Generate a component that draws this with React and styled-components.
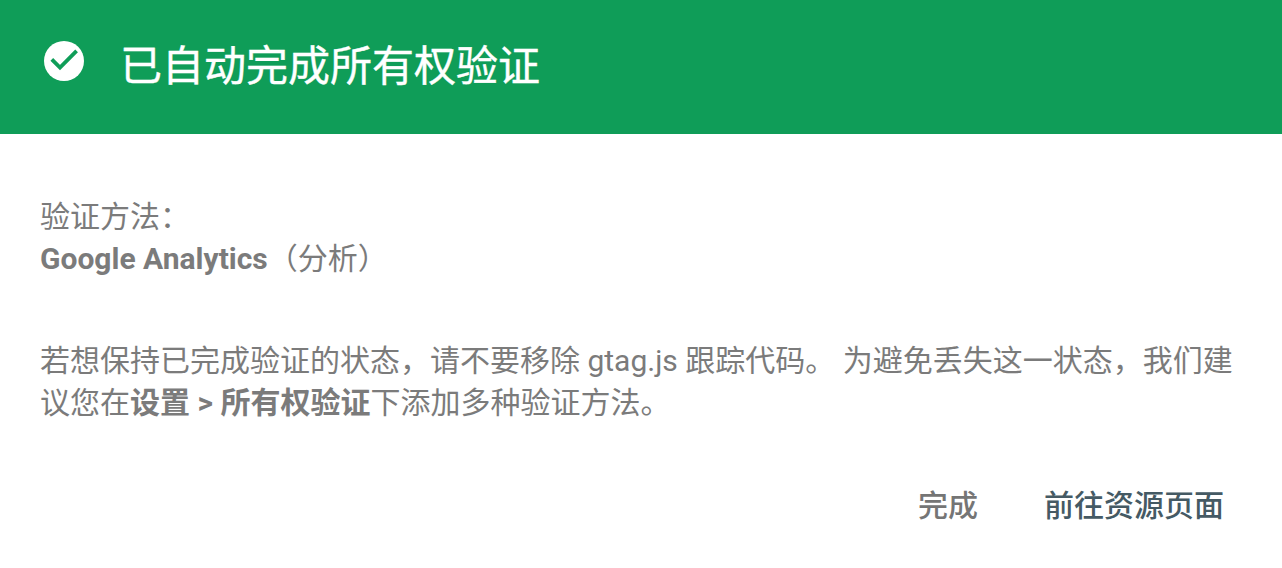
import React from "react";
import styled, { createGlobalStyle } from "styled-components";

const GlobalStyle = createGlobalStyle`
  html, body {
    margin: 0;
    padding: 0;
    background: #fff;
    font-family: Roboto, "Noto Sans CJK SC", sans-serif;
  }
`;

const Dialog = styled.div`
  width: 1282px;
  height: 568px;
  display: flex;
  flex-direction: column;
  overflow: hidden;
`;

const Header = styled.header`
  flex: none;
  height: 134px;
  background: #0f9d58;
  display: flex;
  align-items: center;
  padding-left: 40px;
  box-sizing: border-box;
  color: #fff;
`;

const CheckIcon = styled.svg`
  width: 48px;
  height: 48px;
  margin: -12px 32px 0 0;
  flex: none;
`;

const Title = styled.h1`
  margin: 0;
  font-size: 42px;
  font-weight: 400;
  line-height: 48px;
  -webkit-text-stroke: 0.4px #fff;
`;

const Body = styled.div`
  flex: 1;
  padding: 62px 40px 0;
  color: #7b7b7b;
  font-size: 30px;
  line-height: 42px;
`;

const Block = styled.p`
  margin: 0 0 60px;
`;

const Actions = styled.div`
  flex: none;
  display: flex;
  justify-content: flex-end;
  gap: 66px;
  padding: 0 58px 42px 0;
`;

const Action = styled.button`
  border: 0;
  background: none;
  padding: 0;
  font: 500 30px/40px Roboto, "Noto Sans CJK SC", sans-serif;
  color: ${(props) => (props.$primary ? "#455a64" : "#757575")};
`;

export default function App() {
  return (
    <Dialog>
      <GlobalStyle />
      <Header>
        <CheckIcon viewBox="0 0 24 24">
          <circle cx="12" cy="12" r="10" fill="#fff" />
          <path d="M5.9 11.2l4.1 4.1 8.3-8.4" fill="none" stroke="#0f9d58" strokeWidth="1.9" />
        </CheckIcon>
        <Title>已自动完成所有权验证</Title>
      </Header>
      <Body>
        <Block>
          验证方法：
          <br />
          <b>Google Analytics</b>（分析）
        </Block>
        <Block>
          若想保持已完成验证的状态，请不要移除 gtag.js 跟踪代码。 为避免丢失这一状态，我们建议您在<b>设置 &gt; 所有权验证</b>下添加多种验证方法。
        </Block>
      </Body>
      <Actions>
        <Action>完成</Action>
        <Action $primary>前往资源页面</Action>
      </Actions>
    </Dialog>
  );
}
